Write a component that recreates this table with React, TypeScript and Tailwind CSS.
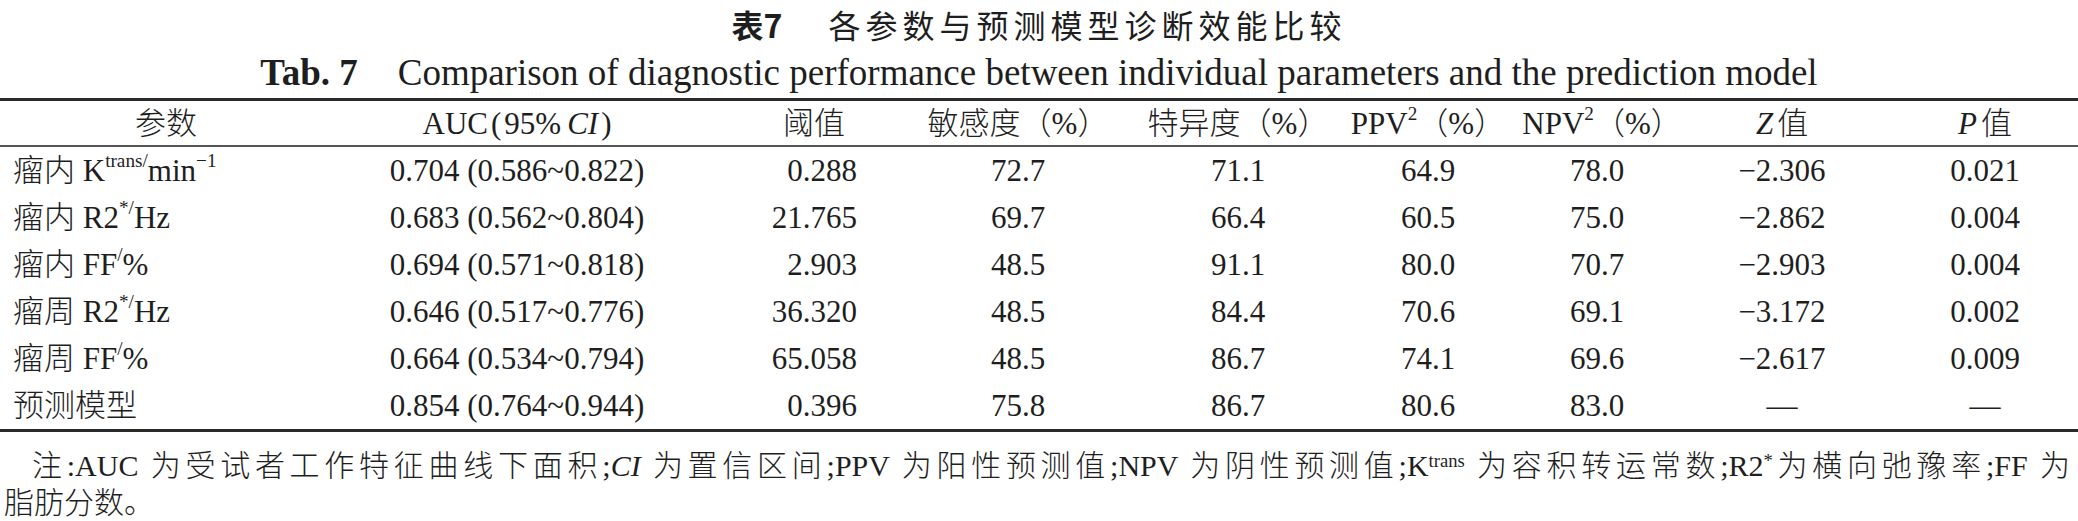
import React from "react";

const serif = "font-['Liberation_Serif','Noto_Sans_CJK_SC',serif]";

function Sup({ children }: { children: React.ReactNode }) {
  return <span className="relative -top-[0.5em] text-[0.62em] leading-none">{children}</span>;
}

type Row = { name: React.ReactNode; vals: string[] };

const rows: Row[] = [
  {
    name: (
      <>
        瘤内 K<Sup>trans/</Sup>min<Sup>−1</Sup>
      </>
    ),
    vals: ["0.704 (0.586~0.822)", "0.288", "72.7", "71.1", "64.9", "78.0", "−2.306", "0.021"],
  },
  {
    name: (
      <>
        瘤内 R2<Sup>*/</Sup>Hz
      </>
    ),
    vals: ["0.683 (0.562~0.804)", "21.765", "69.7", "66.4", "60.5", "75.0", "−2.862", "0.004"],
  },
  {
    name: (
      <>
        瘤内 FF<Sup>/</Sup>%
      </>
    ),
    vals: ["0.694 (0.571~0.818)", "2.903", "48.5", "91.1", "80.0", "70.7", "−2.903", "0.004"],
  },
  {
    name: (
      <>
        瘤周 R2<Sup>*/</Sup>Hz
      </>
    ),
    vals: ["0.646 (0.517~0.776)", "36.320", "48.5", "84.4", "70.6", "69.1", "−3.172", "0.002"],
  },
  {
    name: (
      <>
        瘤周 FF<Sup>/</Sup>%
      </>
    ),
    vals: ["0.664 (0.534~0.794)", "65.058", "48.5", "86.7", "74.1", "69.6", "−2.617", "0.009"],
  },
  {
    name: <>预测模型</>,
    vals: ["0.854 (0.764~0.944)", "0.396", "75.8", "86.7", "80.6", "83.0", "—", "—"],
  },
];

const grid =
  "grid grid-cols-[332px_370px_224px_184px_256px_124px_214px_156px_218px]";

function Cell({ children, className = "" }: { children: React.ReactNode; className?: string }) {
  return (
    <div className={`flex items-center justify-center whitespace-nowrap ${className}`}>{children}</div>
  );
}

export default function App() {
  return (
    <div className={`w-[2078px] h-[521px] overflow-hidden bg-white text-[#1e1e1e] font-light ${serif}`}>
      {/* Chinese title */}
      <div className="h-[47px] flex items-center justify-center text-[32px] leading-none font-['Noto_Sans_CJK_SC',sans-serif]">
        <span className="font-bold">表7</span>
        <span className="ml-[46px] tracking-[5px] font-normal">各参数与预测模型诊断效能比较</span>
      </div>
      {/* English title */}
      <div className="h-[51px] flex items-center justify-center text-[37px] leading-none">
        <span className="font-bold">Tab. 7</span>
        <span className="ml-[40px]">
          Comparison of diagnostic performance between individual parameters and the prediction model
        </span>
      </div>

      {/* Table */}
      <div className="border-t-[3px] border-b-[3px] border-[#2a2a2a] text-[31px] leading-none">
        <div className={`${grid} h-[46px] border-b-2 border-[#555555]`}>
          <Cell>参数</Cell>
          <Cell>
            AUC<span className="mx-[3px]">(</span>95% <i className="ml-[6px]">CI</i>
            <span className="ml-[3px]">)</span>
          </Cell>
          <Cell>阈值</Cell>
          <Cell>敏感度（%）</Cell>
          <Cell>特异度（%）</Cell>
          <Cell>
            PPV<Sup>2</Sup>（%）
          </Cell>
          <Cell className="pl-[10px]">
            NPV<Sup>2</Sup>（%）
          </Cell>
          <Cell>
            <i className="mr-[4px]">Z</i>值
          </Cell>
          <Cell className="pl-[32px]">
            <i className="mr-[4px]">P</i>值
          </Cell>
        </div>
        {rows.map((r, i) => (
          <div key={i} className={`${grid} h-[47px]`}>
            <Cell className="justify-start pl-[13px]">{r.name}</Cell>
            <Cell>{r.vals[0]}</Cell>
            <Cell className="justify-end pr-[69px]">{r.vals[1]}</Cell>
            <Cell>{r.vals[2]}</Cell>
            <Cell>{r.vals[3]}</Cell>
            <Cell>{r.vals[4]}</Cell>
            <Cell>{r.vals[5]}</Cell>
            <Cell>{r.vals[6]}</Cell>
            <Cell className="pl-[32px]">{r.vals[7]}</Cell>
          </div>
        ))}
      </div>

      {/* Note */}
      <div className="pt-[15px] text-[30px] leading-[37px]">
        <div className="pl-[32px] pr-[8px] text-justify [text-align-last:justify] whitespace-nowrap overflow-hidden">
          注:AUC 为受试者工作特征曲线下面积;<i>CI</i> 为置信区间;PPV 为阳性预测值;NPV 为阴性预测值;K
          <Sup>trans</Sup> 为容积转运常数;R2<Sup>*</Sup>为横向弛豫率;FF 为
        </div>
        <div className="pl-[4px]">脂肪分数。</div>
      </div>
    </div>
  );
}
